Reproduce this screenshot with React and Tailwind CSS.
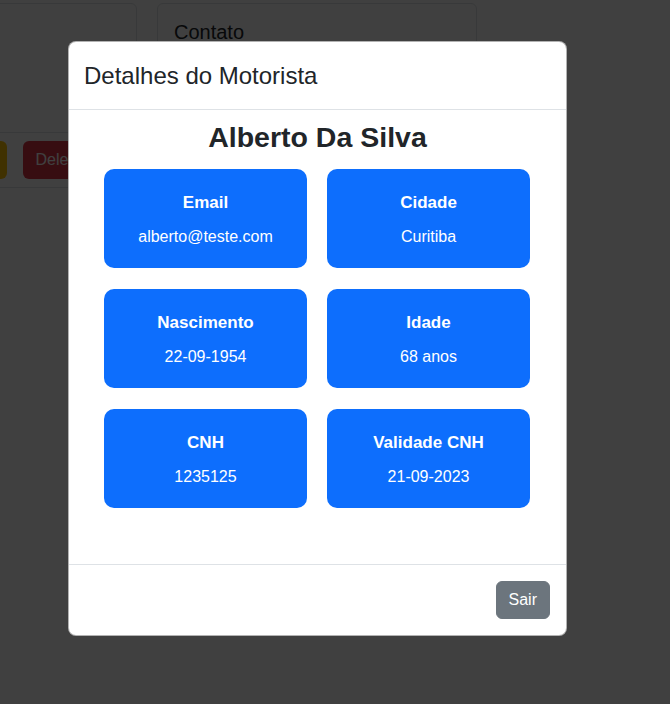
import React from 'react';

const detalhes = [
  { label: 'Email', value: 'alberto@teste.com' },
  { label: 'Cidade', value: 'Curitiba' },
  { label: 'Nascimento', value: '22-09-1954' },
  { label: 'Idade', value: '68 anos' },
  { label: 'CNH', value: '1235125' },
  { label: 'Validade CNH', value: '21-09-2023' },
];

const App = () => {
  return (
    <div className="relative h-[704px] overflow-hidden bg-white text-[#212529] font-['Liberation_Sans',Arial,sans-serif]">
      {/* Pagina de fundo */}
      <div className="flex items-start gap-[20px] pt-[3px] -ml-[183px]">
        <div className="w-[320px] border border-[#dee2e6] rounded-md flex flex-col">
          <div className="h-[128px]" />
          <div className="border-t border-[#dee2e6] py-2 pr-[37px] flex justify-end gap-4">
            <button aria-label="Editar" className="h-[38px] w-[64px] rounded-md bg-[#ffc107]" />
            <button className="h-[38px] px-3 rounded-md bg-[#dc3545] text-white text-[16px]">Deletar</button>
          </div>
        </div>
        <div className="w-[320px] h-[200px] border border-[#dee2e6] rounded-md">
          <div className="p-4">
            <h5 className="text-[20px] leading-[24px]">Contato</h5>
          </div>
        </div>
      </div>

      {/* Modal */}
      <div className="absolute inset-0 bg-black/75">
        <div className="ml-[68px] mt-[41px] w-[499px] bg-white rounded-lg border border-black/30 flex flex-col">
          <div className="h-[68px] px-[15px] flex items-center border-b border-[#dee2e6]">
            <h5 className="text-[24px] leading-[36px]">Detalhes do Motorista</h5>
          </div>

          <div className="px-4 pt-[10px] pb-[56px]">
            <h2 className="text-center font-bold text-[28.5px] leading-[34px] mb-[15px]">Alberto Da Silva</h2>
            <div className="grid grid-cols-[203px_203px] gap-x-[20px] gap-y-[21px] pl-[19px]">
              {detalhes.map((d) => (
                <div key={d.label} className="h-[99px] rounded-[10px] bg-[#0d6efd] text-white text-center pt-[22px]">
                  <div className="font-bold text-[17px] leading-[24px]">{d.label}</div>
                  <div className="text-[16px] leading-[24px] mt-[10px]">{d.value}</div>
                </div>
              ))}
            </div>
          </div>

          <div className="border-t border-[#dee2e6] p-4 flex justify-end">
            <button className="h-[38px] px-3 rounded-md bg-[#6c757d] border border-[#6c757d] text-white text-[16px]">Sair</button>
          </div>
        </div>
      </div>
    </div>
  );
};

export default App;
